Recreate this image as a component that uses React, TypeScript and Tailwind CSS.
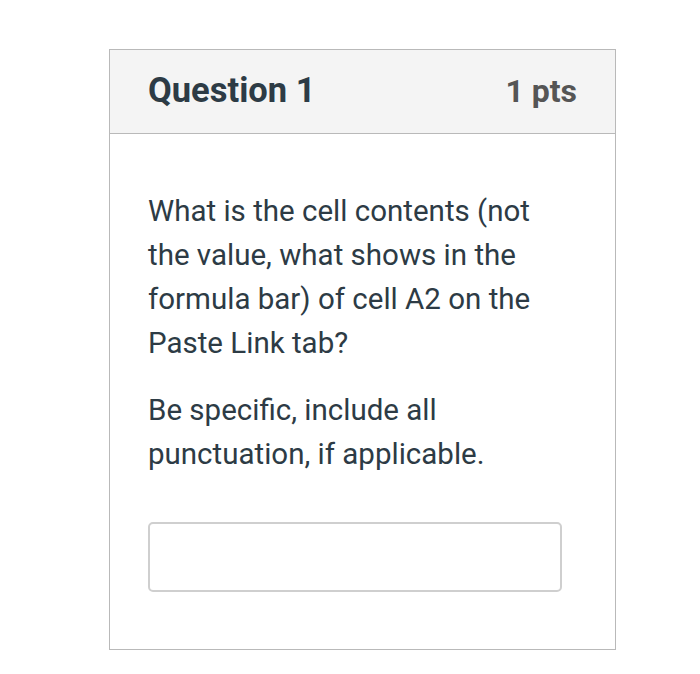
export default function App() {
  return (
    <div className="w-[700px] h-[674px] bg-white pt-[49px] pl-[109px]" style={{ fontFamily: 'Roboto, "Liberation Sans", sans-serif' }}>
      <div className="w-[507px] h-[601px] border border-[#b9b9b9] flex flex-col">
        <div className="h-[84px] bg-[#f4f4f4] border-b border-[#b9b9b9] flex items-center justify-between pl-[38px] pr-[38px] pb-[2px]">
          <div className="text-[34.5px] font-bold text-[#2d3b45] leading-none">Question 1</div>
          <div className="text-[32px] font-bold text-[#555555] leading-none">1 pts</div>
        </div>
        <div className="pl-[38px] pt-[55px]">
          <div className="w-[414px] text-[29.5px] leading-[44px] text-[#2d3b45]">
            <p>What is the cell contents (not the value, what shows in the formula bar) of cell A2 on the Paste Link tab?</p>
            <p className="mt-[23px]">Be specific, include all punctuation, if applicable.</p>
          </div>
          <div className="mt-[46px] w-[414px] h-[70px] border-2 border-[#cfcfcf] rounded-[5px] bg-white"></div>
        </div>
      </div>
    </div>
  );
}
